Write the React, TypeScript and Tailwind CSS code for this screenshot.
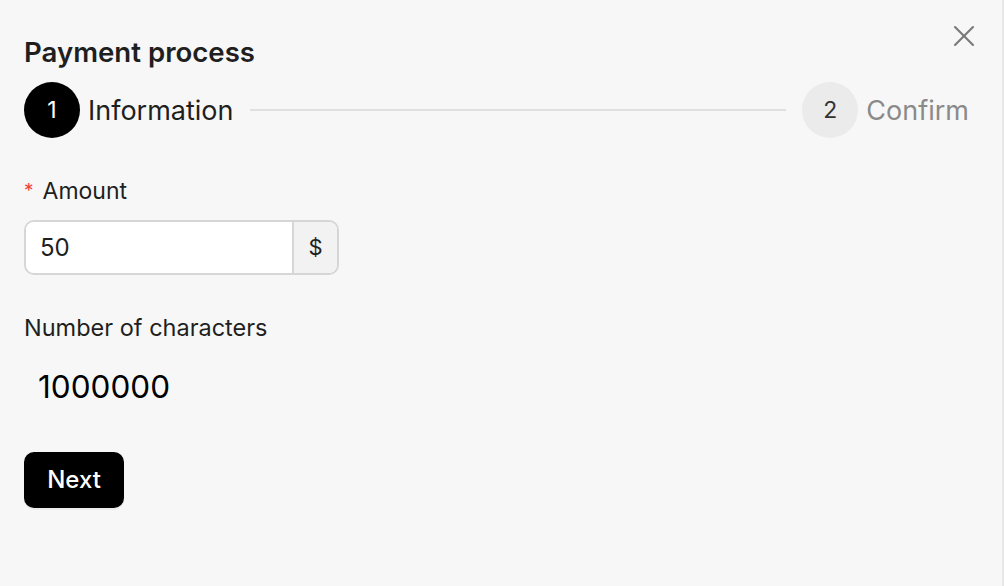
import { X } from 'lucide-react';

export default function App() {
  return (
    <div
      className="relative flex h-[586px] w-[1004px] flex-col border-r-2 border-[#e8e8e8] bg-[#f7f7f7] pl-6 pr-[33px] pt-[35px] text-[#1f1f1f]"
      style={{ fontFamily: 'Inter, "Noto Sans", sans-serif' }}
    >
      <button className="absolute right-[20px] top-[18px] text-[#7a7a7a]">
        <X size={36} strokeWidth={1.4} />
      </button>

      <h2 className="text-[27.6px] font-semibold leading-[34px]">Payment process</h2>

      <div className="mt-[13px] flex h-14 items-center">
        <div className="flex h-14 w-14 items-center justify-center rounded-full bg-black text-[23px] text-white">
          1
        </div>
        <span className="ml-2 pt-[2px] text-[27px]">Information</span>
        <div className="mx-4 h-[2px] flex-1 bg-[#e0e0e0]" />
        <div className="flex h-14 w-14 items-center justify-center rounded-full bg-[#ebebeb] text-[23px] text-[#333]">
          2
        </div>
        <span className="ml-2 pt-[2px] text-[27px] text-[#8a8a8a]">Confirm</span>
      </div>

      <label className="mt-[38px] flex h-[30px] items-center text-[23px]">
        <span className="mr-[9px] text-[19px] text-[#f04438]">*</span>
        Amount
      </label>

      <div className="mt-[14px] flex h-[55px] w-[315px] overflow-hidden rounded-[10px] border-2 border-[#d6d6d6]">
        <input
          className="min-w-0 flex-1 bg-white px-[14px] text-[24px] outline-none"
          defaultValue="50"
        />
        <div className="flex w-[45px] items-center justify-center border-l-2 border-[#d6d6d6] bg-[#f2f2f2] text-[22px]">
          $
        </div>
      </div>

      <div className="mt-[38px] flex h-[30px] items-center text-[23.5px]">Number of characters</div>
      <div className="mt-[24px] flex h-[40px] items-center px-[14px] text-[31.5px] text-black">1000000</div>

      <div className="mt-[45px]">
        <button className="h-14 w-[100px] rounded-[10px] bg-black text-[24px] font-medium text-white shadow-[0_2px_0_rgba(0,0,0,0.04)]">
          Next
        </button>
      </div>
    </div>
  );
}
